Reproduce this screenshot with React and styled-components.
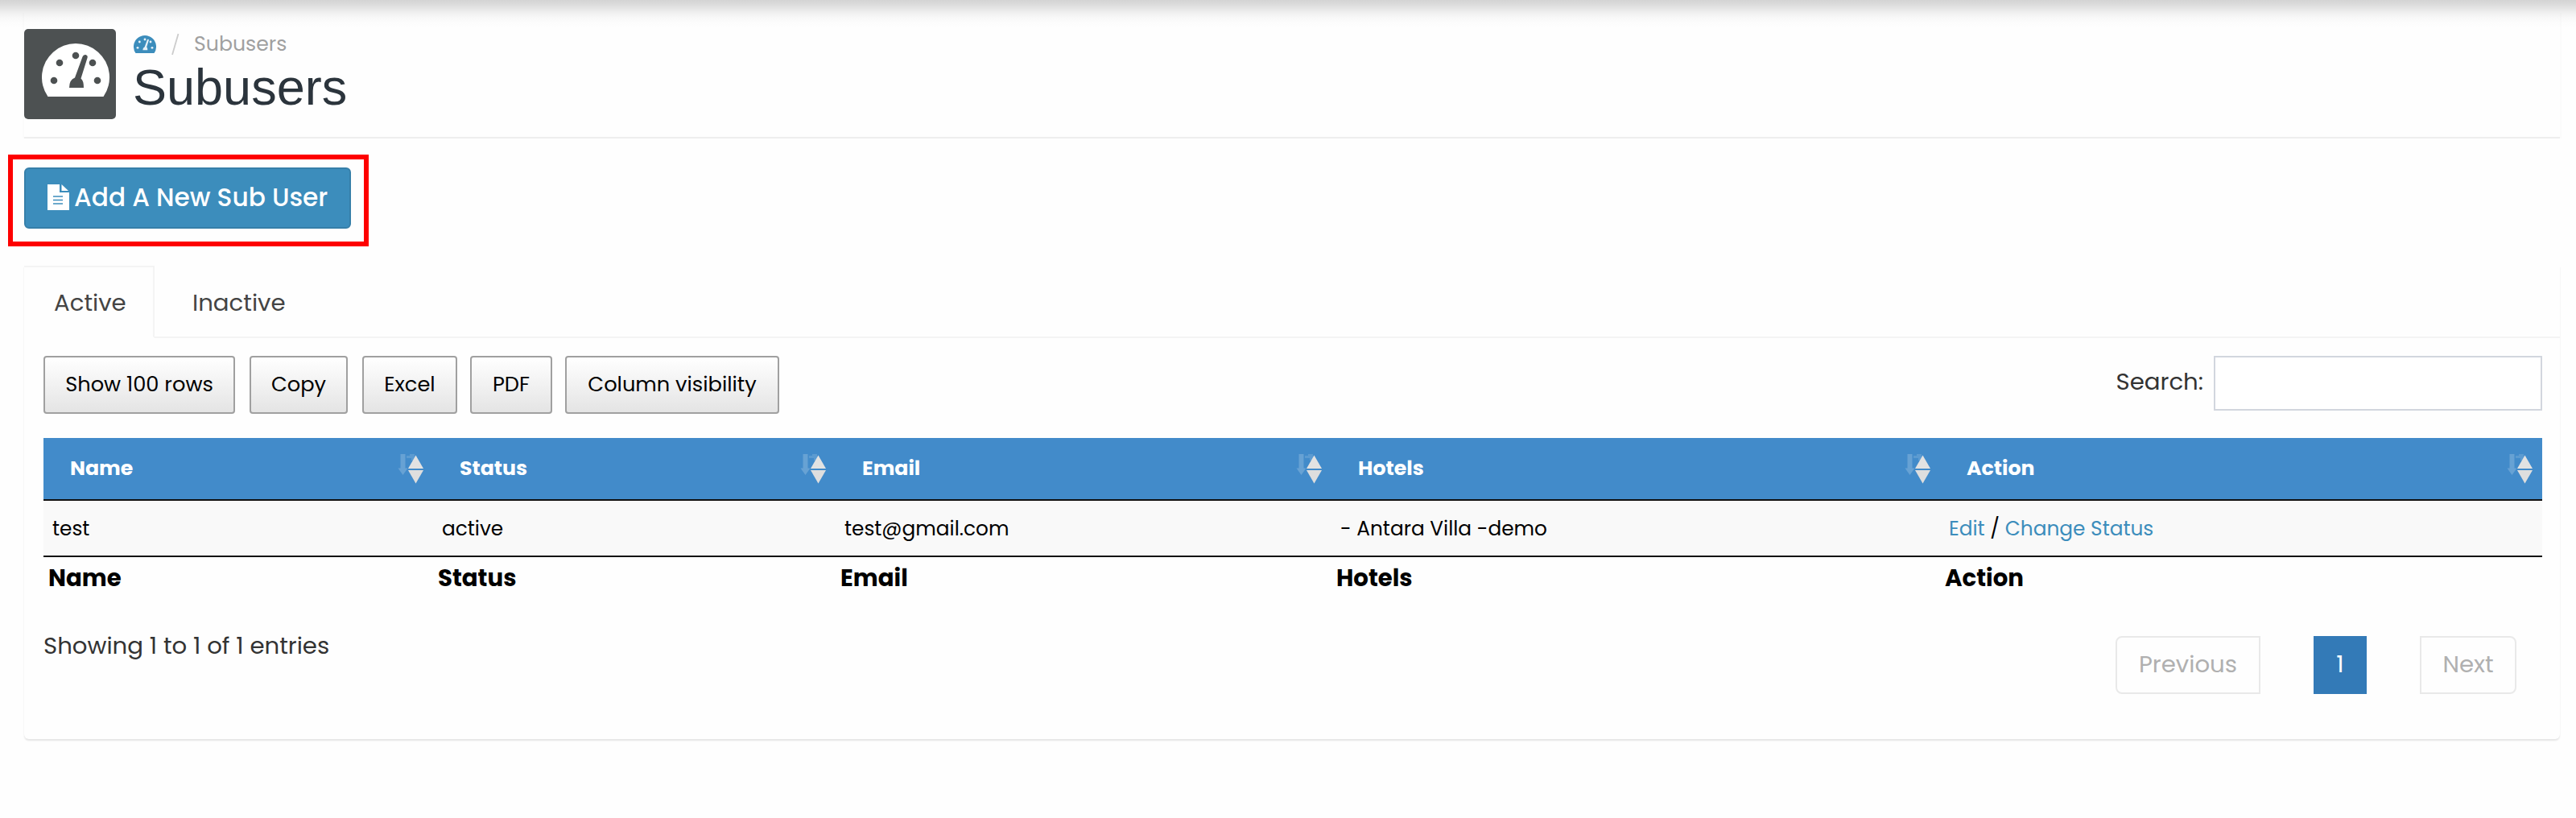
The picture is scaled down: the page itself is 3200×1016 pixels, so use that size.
import styled, { createGlobalStyle } from 'styled-components'
import React from 'react';


const columns = ['Name', 'Status', 'Email', 'Hotels', 'Action']

const tools = [
  { label: 'Show 100 rows', width: 238, gap: 18 },
  { label: 'Copy', width: 122, gap: 18 },
  { label: 'Excel', width: 118, gap: 16 },
  { label: 'PDF', width: 102, gap: 16 },
  { label: 'Column visibility', width: 266, gap: 0 },
]

const users = [
  { name: 'test', status: 'active', email: 'test@gmail.com', hotels: '- Antara Villa -demo' },
]

function Gauge({ color, hole, width }) {
  return (
    <svg width={width} height={width * 66 / 84} viewBox="0 0 84 66">
      <path d="M7.5 66A42 42 0 1 1 76.5 66Z" fill={color} />
      <g fill={hole}>
        <circle cx="15" cy="46" r="4.3" />
        <circle cx="22" cy="24" r="4.3" />
        <circle cx="42" cy="15" r="4.3" />
        <circle cx="63" cy="24" r="4.3" />
        <circle cx="69" cy="46" r="4.3" />
        <path d="M50.5 16.5Q51.5 13.5 54.5 14Q57.5 15 56.5 18L48.5 43.5Q52 46 52 55H34Q34 45 41 42.5Z" />
      </g>
    </svg>
  )
}

function FileIcon() {
  return (
    <svg width="27" height="32" viewBox="0 0 27 32">
      <path d="M0 0H15V10H27V32H0Z" fill="#fff" />
      <path d="M17.5 0L26 8H17.5Z" fill="#fff" />
      <path d="M7 15H19M7 19.5H19M7 24H19" stroke="#3c8dbc" strokeWidth="1.6" />
    </svg>
  )
}

function SortIcon() {
  return (
    <svg width="34" height="38" viewBox="0 0 34 38">
      <path d="M4.5 1H10.5V18.5H13.5L7.5 27L1.5 18.5H4.5Z" fill="#fff" opacity="0.2" />
      <path d="M12 3H16V1H22V9H18V6H12Z" fill="#fff" opacity="0.14" />
      <path d="M23.5 2.5L33 19H14Z" fill="#e2e2e2" />
      <path d="M14 21H33L23.5 37.5Z" fill="#dedede" />
    </svg>
  )
}

function App() {
  return (
    <Page>
      <GlobalStyle />
      <Header>
        <IconBox><Gauge color="#fff" hole="#4d5152" width={84} /></IconBox>
        <HeaderText>
          <Crumbs>
            <Gauge color="#3c8dbc" hole="#e6f1f8" width={28} />
            <svg width="10" height="28" viewBox="0 0 10 28"><path d="M1 27L8.5 1" stroke="#ccc" strokeWidth="1.8" /></svg>
            <span>Subusers</span>
          </Crumbs>
          <Title>Subusers</Title>
        </HeaderText>
      </Header>

      <Highlight>
        <AddButton><FileIcon />Add A New Sub User</AddButton>
      </Highlight>

      <Panel>
        <Tabs>
          <Tab $active>Active</Tab>
          <Tab>Inactive</Tab>
        </Tabs>
        <Content>
          <Toolbar>
            {tools.map((item) => (
              <ToolButton key={item.label} $width={item.width} $gap={item.gap}>{item.label}</ToolButton>
            ))}
            <Search>Search:<input type="text" /></Search>
          </Toolbar>

          <HeadRow>
            {columns.map((col) => (
              <HeadCell key={col}><span>{col}</span><SortIcon /></HeadCell>
            ))}
          </HeadRow>
          {users.map((user) => (
            <BodyRow key={user.email}>
              <Cell>{user.name}</Cell>
              <Cell>{user.status}</Cell>
              <Cell>{user.email}</Cell>
              <Cell>{user.hotels}</Cell>
              <Cell><a>Edit</a> / <a>Change Status</a></Cell>
            </BodyRow>
          ))}
          <FootRow>
            {columns.map((col) => (
              <FootCell key={col}>{col}</FootCell>
            ))}
          </FootRow>

          <Bottom>
            <Info>Showing 1 to 1 of 1 entries</Info>
            <Pages>
              <PageButton $width={180} $radius="8px 0 0 8px">Previous</PageButton>
              <PageButton $width={66} $current>1</PageButton>
              <PageButton $width={120} $radius="0 8px 8px 0">Next</PageButton>
            </Pages>
          </Bottom>
        </Content>
      </Panel>
    </Page>
  )
}

export default App;

const GlobalStyle = createGlobalStyle`
*{
  box-sizing: border-box;
}
body{
  margin: 0;
  background: #fefefe;
  font-family: Poppins, Inter, sans-serif;
}
svg{
  display: block;
  flex: none;
}
`

const Page = styled.div`
height: 1016px;
padding-top: 16px;
overflow: hidden;
white-space: nowrap;
background: linear-gradient(#d4d4d4 0, #d9d9d9 4px, #e4e4e4 10px, #f0f0f0 16px, #f8f8f8 22px, #fcfcfc 28px, #fefefe 34px) no-repeat #fefefe;
background-size: 100% 34px;
`

const Header = styled.div`
display: flex;
height: 156px;
margin: 0 20px 0 30px;
padding-top: 20px;
border-bottom: 2px solid #eee;
box-shadow: -2px 0 0 rgba(0,0,0,0.012), 2px 0 0 rgba(0,0,0,0.012);
`

const IconBox = styled.div`
width: 114px;
height: 112px;
padding: 18px 0 0 22px;
border-radius: 5px;
background: #4d5152;
`

const HeaderText = styled.div`
padding: 3px 0 0 22px;
`

const Crumbs = styled.div`
display: flex;
align-items: center;
height: 32px;
color: #a0a0a0;
font-size: 25.2px;
svg + svg{
  margin: 0 18px 0 19px;
}
`

const Title = styled.h1`
margin: 3px 0 0 -1px;
color: #2b343c;
font-family: "Liberation Sans", sans-serif;
font-size: 63px;
font-weight: 400;
line-height: 68px;
`

const Highlight = styled.div`
width: 448px;
height: 114px;
margin: 20px 0 24px 10px;
padding: 10px 14px;
border: 6px solid #fe0000;
`

const AddButton = styled.button`
display: flex;
align-items: center;
gap: 6px;
width: 406px;
height: 76px;
padding: 0 0 2px 27px;
border: 2px solid #367fa9;
border-radius: 6px;
background: #3c8dbc;
color: #fff;
font: inherit;
font-size: 31.2px;
font-weight: 500;
`

const Panel = styled.div`
height: 588px;
margin: 0 20px 0 30px;
border-radius: 0 0 6px 6px;
box-shadow: 0 2px 2px rgba(0,0,0,0.1);
`

const Tabs = styled.div`
display: flex;
height: 90px;
&:after{
  content: '';
  flex: 1;
  border-bottom: 2px solid #f4f4f4;
}
`

const Tab = styled.div`
width: ${props => props.$active ? '162px' : '200px'};
padding-left: ${props => props.$active ? '37px' : '47px'};
border-top: 2px solid ${props => props.$active ? '#f4f4f4' : 'transparent'};
border-right: ${props => props.$active ? '2px solid #f4f4f4' : '0'};
border-bottom: 2px solid ${props => props.$active ? 'transparent' : '#f4f4f4'};
color: #444;
font-size: 29.2px;
line-height: 88px;
`

const Content = styled.div`
padding: 22px 22px 0 24px;
`

const Toolbar = styled.div`
display: flex;
align-items: flex-start;
height: 102px;
`

const ToolButton = styled.button`
width: ${props => props.$width}px;
height: 72px;
margin-right: ${props => props.$gap}px;
padding: 0 0 2px;
border: 2px solid #a0a0a0;
border-radius: 4px;
background: linear-gradient(#fff, #e4e4e4);
color: #000;
font: inherit;
font-size: 25.7px;
`

const Search = styled.label`
display: flex;
margin-left: auto;
color: #333;
font-size: 29.2px;
line-height: 63px;
input{
  width: 408px;
  height: 68px;
  margin-left: 13px;
  border: 2px solid #d2d6de;
  background: #fff;
}
`

const Row = styled.div`
display: grid;
grid-template-columns: 484px 500px 616px 756px 748px;
align-items: center;
`

const HeadRow = styled(Row)`
height: 78px;
border-bottom: 2px solid #111;
background: #428bca;
`

const HeadCell = styled.div`
display: flex;
align-items: center;
justify-content: space-between;
padding: 0 11px 0 33px;
color: #fff;
font-size: 25.2px;
font-weight: 700;
`

const BodyRow = styled(Row)`
height: 70px;
border-bottom: 2px solid #111;
background: #f9f9f9;
`

const Cell = styled.div`
padding-left: 11px;
color: #000;
font-size: 24.8px;
a{
  color: #3c8dbc;
}
`

const FootRow = styled(Row)`
height: 52px;
`

const FootCell = styled.div`
padding-left: 6px;
color: #000;
font-size: 29.2px;
font-weight: 700;
`

const Bottom = styled.div`
display: flex;
justify-content: space-between;
padding: 46px 32px 0 0;
`

const Info = styled.div`
color: #333;
font-size: 29.2px;
line-height: 24px;
`

const Pages = styled.div`
display: flex;
gap: 66px;
`

const PageButton = styled.div`
width: ${props => props.$width}px;
height: 72px;
border: 2px solid ${props => props.$current ? '#337ab7' : '#e9e9e9'};
border-radius: ${props => props.$radius || 0};
background: ${props => props.$current ? '#337ab7' : 'transparent'};
color: ${props => props.$current ? '#fff' : '#b0b0b0'};
font-size: 29.2px;
line-height: 65px;
text-align: center;
`
